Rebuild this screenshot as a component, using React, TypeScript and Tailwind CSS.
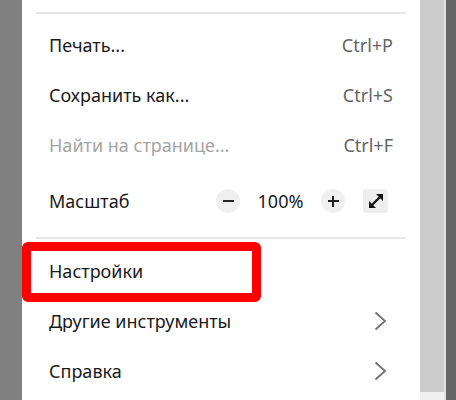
const font = { fontFamily: '"Noto Sans", "Open Sans", sans-serif' };

const Chevron = () => (
  <svg width="13" height="20" viewBox="0 0 13 20" className="mr-[6px]">
    <path d="M1.5 1.5 L11 10 L1.5 18.5" fill="none" stroke="#707070" strokeWidth="1.8" />
  </svg>
);

const MenuRow = ({
  label,
  shortcut,
  disabled,
  submenu,
}: {
  label: string;
  shortcut?: string;
  disabled?: boolean;
  submenu?: boolean;
}) => (
  <div className="flex h-[50px] items-center justify-between pl-[27px] pr-[27px]">
    <span className={disabled ? "text-[#a4a4a4]" : "text-[#1a1a1a]"}>{label}</span>
    {shortcut && <span className="text-[#646464]">{shortcut}</span>}
    {submenu && <Chevron />}
  </div>
);

const Divider = () => <div className="mx-[14px] h-[2px] bg-[#e6e6e6]" />;

export default function App() {
  return (
    <div className="relative flex h-[400px] w-[456px] overflow-hidden bg-[#808080]" style={font}>
      <div className="w-[22px] shrink-0" />

      <div className="flex w-[398px] shrink-0 flex-col bg-white pt-[12px] text-[18px] leading-none">
        <Divider />
        <div className="h-[6px]" />
        <MenuRow label="Печать..." shortcut="Ctrl+P" />
        <MenuRow label="Сохранить как..." shortcut="Ctrl+S" />
        <MenuRow label="Найти на странице..." shortcut="Ctrl+F" disabled />

        <div className="flex h-[62px] items-center justify-between pl-[27px] pr-[32px]">
          <span className="text-[#1a1a1a]">Масштаб</span>
          <div className="flex items-center">
            <div className="flex h-[24px] w-[24px] items-center justify-center rounded-full bg-[#f0f0f0]">
              <div className="h-[2px] w-[11px] bg-[#222]" />
            </div>
            <div className="w-[81px] text-center text-[#1a1a1a]">100%</div>
            <div className="relative flex h-[24px] w-[24px] items-center justify-center rounded-full bg-[#f0f0f0]">
              <div className="h-[2px] w-[11px] bg-[#222]" />
              <div className="absolute h-[11px] w-[2px] bg-[#222]" />
            </div>
            <div className="ml-[18px] flex h-[24px] w-[25px] items-center justify-center rounded-[3px] bg-[#eeeeee]">
              <svg width="18" height="18" viewBox="0 0 18 18">
                <path d="M5 13 L13 5" stroke="#111" strokeWidth="2.4" />
                <path d="M9 2 H16 V9 Z" fill="#111" />
                <path d="M2 9 V16 H9 Z" fill="#111" />
              </svg>
            </div>
          </div>
        </div>

        <div className="h-[5px]" />
        <Divider />
        <div className="h-[7px]" />
        <MenuRow label="Настройки" />
        <MenuRow label="Другие инструменты" submenu />
        <MenuRow label="Справка" submenu />
      </div>

      <div className="flex w-[24px] shrink-0 flex-col bg-[#cccccc]">
        <div className="flex-1" />
        <div className="h-[8px] bg-[#f0f0f0]" />
      </div>
      <div className="w-[2px] shrink-0 bg-[#e2e2e2]" />
      <div className="flex-1 bg-[#666666]" />

      <div className="absolute left-[22px] top-[242px] h-[60px] w-[239px] rounded-[6px] border-[9px] border-[#ff0000]" />
    </div>
  );
}
